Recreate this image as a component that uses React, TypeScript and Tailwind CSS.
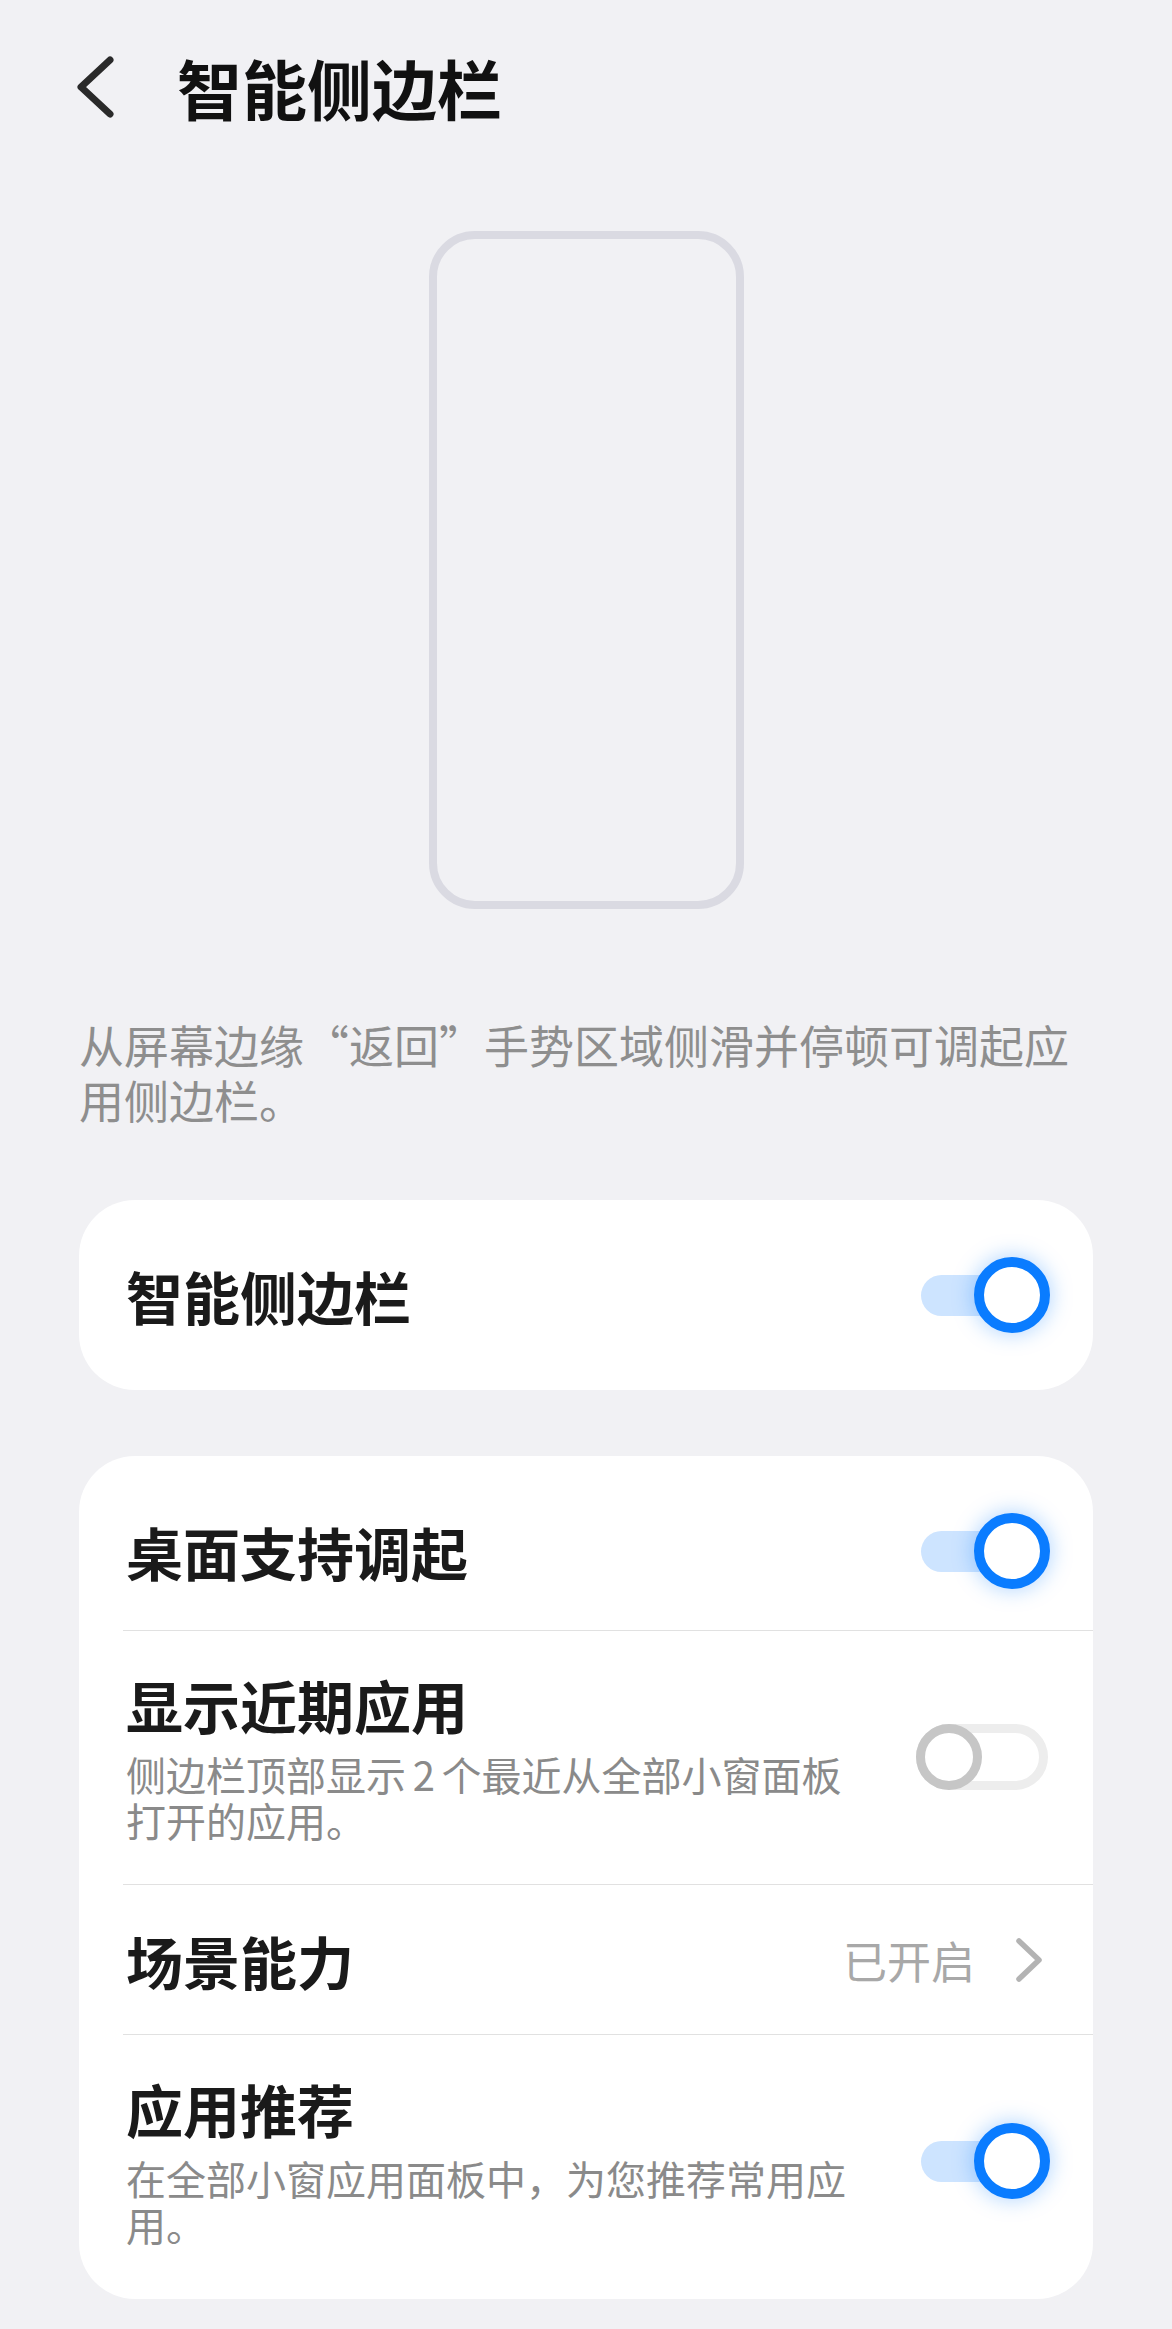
import React from 'react';

const font = { fontFamily: '"Noto Sans CJK SC", "Noto Sans", sans-serif' };

const SwitchOn = () => (
  <div className="relative h-[76px] w-[129px] shrink-0">
    <div className="absolute left-0 top-[18px] h-[41px] w-[100px] rounded-full bg-[#cde4ff]" />
    <div className="absolute right-0 top-0 h-[76px] w-[76px] rounded-full border-[10px] border-[#0a7cff] bg-white shadow-[0_0_22px_rgba(10,124,255,0.35)]" />
  </div>
);

const SwitchOff = () => (
  <div className="relative mr-[2px] h-[66px] w-[132px] shrink-0 rounded-full border-[9px] border-[#ededed] bg-white">
    <div className="absolute -left-[9px] -top-[9px] h-[66px] w-[66px] rounded-full border-[9px] border-[#c6c6c6] bg-white" />
  </div>
);

const Divider = () => <div className="ml-[44px] h-px bg-[#e1e1e1]" />;

const App = () => {
  return (
    <div className="min-h-[2329px] w-full bg-[#f1f1f4] pt-[43px]" style={font}>
      {/* header */}
      <div className="flex h-[88px] items-center pl-[77px]">
        <svg width="37" height="62" viewBox="0 0 37 62" className="shrink-0">
          <path
            d="M33 4 L4 31 L33 58"
            fill="none"
            stroke="#2a2a2a"
            strokeWidth="7"
            strokeLinecap="round"
            strokeLinejoin="round"
          />
        </svg>
        <h1 className="ml-[63px] text-[65px] font-bold leading-[88px] text-[#111]">智能侧边栏</h1>
      </div>

      {/* phone outline */}
      <div className="mx-auto mt-[100px] h-[678px] w-[315px] rounded-[46px] border-[8px] border-[#dadae2]" />

      {/* description */}
      <p className="ml-[79px] mt-[108px] w-[1014px] text-[45px] leading-[55px] text-[#8e8e8e]">
        从屏幕边缘“返回”手势区域侧滑并停顿可调起应用侧边栏。
      </p>

      {/* main switch */}
      <div className="mx-[79px] mt-[73px] flex h-[190px] items-center justify-between rounded-[56px] bg-white pl-[47px] pr-[43px]">
        <span className="text-[57px] font-semibold leading-[68px] text-[#1a1a1a]">智能侧边栏</span>
        <SwitchOn />
      </div>

      {/* options */}
      <div className="mx-[79px] mt-[66px] rounded-[56px] bg-white pb-[11px] pt-[16px]">
        <div className="flex h-[158px] items-center justify-between pl-[47px] pr-[43px]">
          <span className="text-[57px] font-semibold leading-[68px] text-[#1a1a1a]">桌面支持调起</span>
          <SwitchOn />
        </div>
        <Divider />
        <div className="flex items-center justify-between pb-[41px] pl-[47px] pr-[43px] pt-[39px]">
          <div className="w-[730px]">
            <div className="text-[57px] font-semibold leading-[68px] text-[#1a1a1a]">显示近期应用</div>
            <div className="mt-[13px] text-[40px] leading-[46px] text-[#8a8a8a]">
              {'侧边栏顶部显示\u20062\u2006个最近从全部小窗面板打开的应用。'}
            </div>
          </div>
          <SwitchOff />
        </div>
        <Divider />
        <div className="flex h-[149px] items-center justify-between pl-[47px] pr-[43px]">
          <span className="text-[57px] font-semibold leading-[68px] text-[#1a1a1a]">场景能力</span>
          <div className="flex items-center">
            <span className="text-[44px] leading-[56px] text-[#a8a8a8]">已开启</span>
            <svg width="32" height="48" viewBox="0 0 32 48" className="ml-[38px] mr-[5px]">
              <path
                d="M6 5 L26 24 L6 43"
                fill="none"
                stroke="#b3b3b3"
                strokeWidth="5.5"
                strokeLinecap="round"
                strokeLinejoin="round"
              />
            </svg>
          </div>
        </div>
        <Divider />
        <div className="flex items-center justify-between pb-[41px] pl-[47px] pr-[43px] pt-[39px]">
          <div className="w-[730px]">
            <div className="text-[57px] font-semibold leading-[68px] text-[#1a1a1a]">应用推荐</div>
            <div className="mt-[13px] text-[40px] leading-[46px] text-[#8a8a8a]">
              在全部小窗应用面板中，为您推荐常用应用。
            </div>
          </div>
          <SwitchOn />
        </div>
      </div>
    </div>
  );
};

export default App;
